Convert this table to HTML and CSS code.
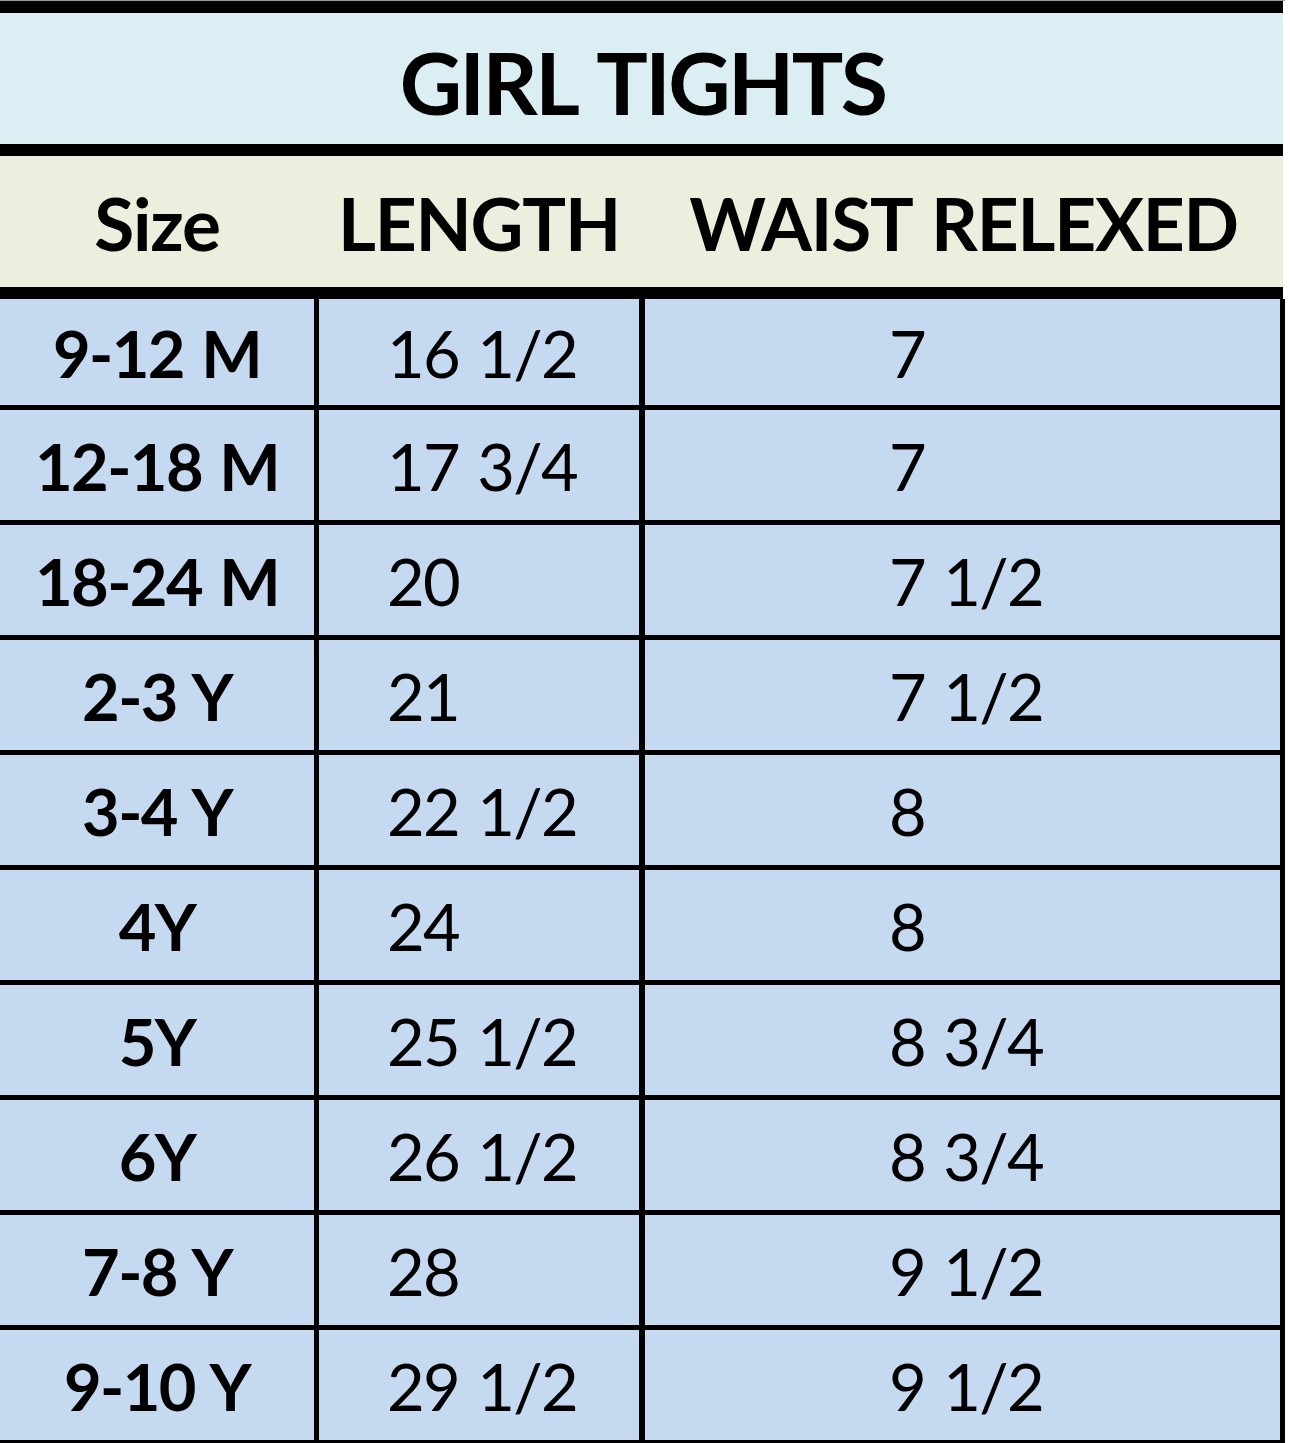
FILE: index.html
```html
<!DOCTYPE html>
<html lang="en">
<head>
<meta charset="utf-8">
<title>Girl Tights</title>
<link rel="stylesheet" href="styles.css">
</head>
<body>
<div class="sheet">
  <div class="title-band"><h1 class="title">GIRL TIGHTS</h1></div>
  <div class="head-row">
    <div class="head-cell">Size</div>
    <div class="head-cell">LENGTH</div>
    <div class="head-cell">WAIST RELEXED</div>
  </div>
  <div class="rows">
    <div class="row first"><div class="cell size">9-12 M</div><div class="cell len">16 1/2</div><div class="cell waist">7</div></div>
    <div class="row"><div class="cell size">12-18 M</div><div class="cell len">17 3/4</div><div class="cell waist">7</div></div>
    <div class="row"><div class="cell size">18-24 M</div><div class="cell len">20</div><div class="cell waist">7 1/2</div></div>
    <div class="row"><div class="cell size">2-3 Y</div><div class="cell len">21</div><div class="cell waist">7 1/2</div></div>
    <div class="row"><div class="cell size">3-4 Y</div><div class="cell len">22 1/2</div><div class="cell waist">8</div></div>
    <div class="row"><div class="cell size">4Y</div><div class="cell len">24</div><div class="cell waist">8</div></div>
    <div class="row"><div class="cell size">5Y</div><div class="cell len">25 1/2</div><div class="cell waist">8 3/4</div></div>
    <div class="row"><div class="cell size">6Y</div><div class="cell len">26 1/2</div><div class="cell waist">8 3/4</div></div>
    <div class="row"><div class="cell size">7-8 Y</div><div class="cell len">28</div><div class="cell waist">9 1/2</div></div>
    <div class="row"><div class="cell size">9-10 Y</div><div class="cell len">29 1/2</div><div class="cell waist">9 1/2</div></div>
  </div>
</div>
</body>
</html>
```

FILE: styles.css
```css
html, body {
  margin: 0;
  padding: 0;
  background: #ffffff;
}

body {
  font-family: Lato, "Open Sans", "Liberation Sans", sans-serif;
  color: #000000;
  height: 1443px;
  overflow: hidden;
}

.sheet {
  width: 1285px;
  border-top: 1px solid #9a9a9a;
}

.title-band {
  width: 1283px;
  height: 131px;
  background: #dbeef3;
  border-top: 12px solid #000;
  border-bottom: 12px solid #000;
  display: flex;
  align-items: center;
  justify-content: center;
}

.title {
  margin: 0;
  font-size: 86px;
  font-weight: 700;
  letter-spacing: -2.6px;
  word-spacing: 6px;
  line-height: 1;
  padding-left: 2px;
  padding-top: 6px;
}

.head-row {
  width: 1283px;
  height: 131px;
  background: #ebf0de;
  border-bottom: 12px solid #000;
  display: grid;
  grid-template-columns: 314px 330px 639px;
  align-items: center;
}

.head-cell {
  text-align: center;
  font-size: 73px;
  font-weight: 700;
  letter-spacing: -1.2px;
  word-spacing: 4px;
  line-height: 1;
  padding-top: 4px;
}

.row {
  display: grid;
  grid-template-columns: 319px 326px 635px;
  height: 110px;
  border-bottom: 5px solid #000;
  border-right: 5px solid #000;
  background: #c5d9f1;
  width: 1280px;
}

.row.first {
  height: 106px;
}

.cell {
  display: flex;
  align-items: center;
  font-size: 65px;
  letter-spacing: -1.6px;
  word-spacing: 3px;
  line-height: 1;
  padding-top: 2px;
}

.cell.size {
  justify-content: center;
  font-weight: 700;
  border-right: 5px solid #000;
}

.cell.len {
  padding-left: 68px;
  border-right: 6px solid #000;
}

.cell.waist {
  padding-left: 244px;
}
```
